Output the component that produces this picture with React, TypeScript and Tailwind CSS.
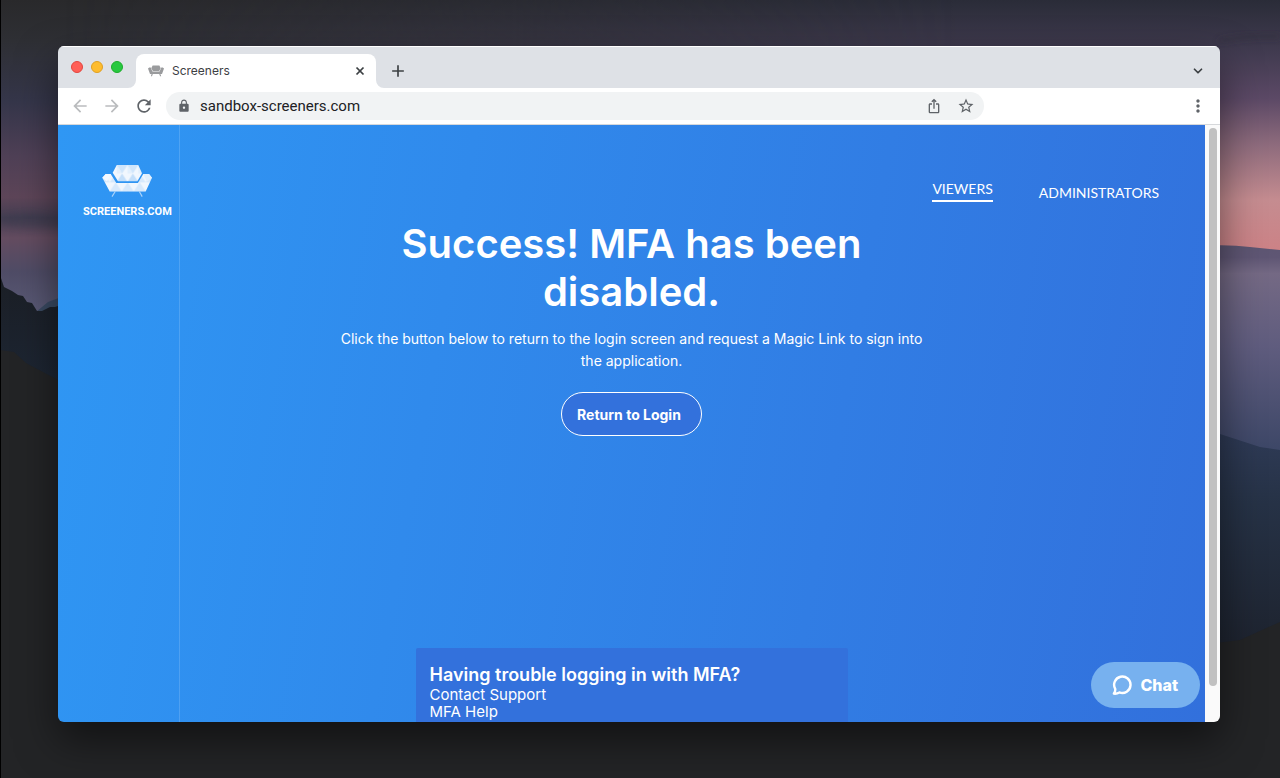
import React from "react"
import { ChevronDown, Plus, X } from "lucide-react"
import {
  MdArrowBack,
  MdArrowForward,
  MdIosShare,
  MdLock,
  MdMoreVert,
  MdRefresh,
  MdStarOutline,
} from "react-icons/md"

const BACK = "14.7,0 36.3,0 40,8.3 35.3,16.3 16,16.3 10.7,7.7"
const SEAT =
  "0.3,12.7 3.7,9 8.7,9 14.3,17.9 35.9,17.9 41.3,9 47,9 50,12.7 43.7,26.5 7.7,26.5"

function SofaLogo() {
  return (
    <svg width="50" height="32" viewBox="0 0 50 32" aria-hidden="true">
      <defs>
        <pattern id="facets" width="10.8" height="17" patternUnits="userSpaceOnUse" x="3.9">
          <rect width="10.8" height="17" fill="#f1f7fe" />
          <path d="M0 0h10.8L5.4 8.5z" fill="#cfe5fb" />
          <path d="M5.4 8.5 10.8 17H0z" fill="#c4dffa" />
          <path d="M0 0 5.4 8.5H0z" fill="#e3f0fd" />
        </pattern>
        <pattern id="seatFacets" width="12" height="9" patternUnits="userSpaceOnUse" x="7.7" y="17.4">
          <rect width="12" height="9" fill="#f1f7fe" />
          <path d="M0 9 6 0l6 9z" fill="#d7e9fc" />
        </pattern>
      </defs>
      <polygon points={BACK} fill="url(#facets)" />
      <polygon points={SEAT} fill="url(#seatFacets)" />
      <path d="M0.3 12.7 3.7 9h5L5 16.5z" fill="#f4f9ff" />
      <path d="M50 12.7 47 9h-5.7L45 16.5z" fill="#e3f0fd" />
      <path d="M13.4 26.3 10 31.6M37.2 26.3l3 5.3" stroke="#a9d2fa" strokeWidth="1.2" fill="none" />
    </svg>
  )
}

function SofaFavicon() {
  return (
    <svg width="16" height="12" viewBox="0 0 16 12" fill="#9a9b9d" aria-hidden="true">
      <path d="M4.6 0.6h6.8l1.3 2.6-1.5 2.8H4.8L3.3 3.2z" />
      <path d="M0 3.6 1.2 2.6h1.5L4.4 6.6h7.2l1.7-4h1.5L16 3.6l-2 5.4H2z" />
      <path d="M3.6 9h1.2L4 11.2H2.9zM11.2 9h1.2l.8 2.2h-1.1z" />
    </svg>
  )
}

function Wallpaper() {
  return (
    <svg
      className="absolute inset-0 h-full w-full"
      viewBox="0 0 1280 778"
      preserveAspectRatio="none"
      aria-hidden="true"
    >
      <defs>
        <linearGradient id="skyLeft" x1="0" y1="0" x2="0" y2="340" gradientUnits="userSpaceOnUse">
          <stop offset="0" stopColor="#29292b" />
          <stop offset="0.12" stopColor="#2e2f34" />
          <stop offset="0.3" stopColor="#35364a" />
          <stop offset="0.46" stopColor="#4f4056" />
          <stop offset="0.58" stopColor="#5d4558" />
          <stop offset="0.64" stopColor="#443e52" />
          <stop offset="0.7" stopColor="#644c60" />
          <stop offset="0.8" stopColor="#4f4c66" />
          <stop offset="1" stopColor="#626482" />
        </linearGradient>
        <linearGradient id="skyRight" x1="0" y1="0" x2="0" y2="260" gradientUnits="userSpaceOnUse">
          <stop offset="0" stopColor="#2a2c38" />
          <stop offset="0.2" stopColor="#413b50" />
          <stop offset="0.38" stopColor="#5c4966" />
          <stop offset="0.55" stopColor="#8c6a7c" />
          <stop offset="0.77" stopColor="#c58c90" />
          <stop offset="0.96" stopColor="#cc8286" />
        </linearGradient>
        <linearGradient id="hazeRight" x1="0" y1="245" x2="0" y2="450" gradientUnits="userSpaceOnUse">
          <stop offset="0" stopColor="#5d5672" />
          <stop offset="0.06" stopColor="#5f5674" />
          <stop offset="0.14" stopColor="#746984" />
          <stop offset="0.5" stopColor="#5f5c7e" />
          <stop offset="1" stopColor="#3d4767" />
        </linearGradient>
        <linearGradient id="hillRight" x1="0" y1="430" x2="0" y2="640" gradientUnits="userSpaceOnUse">
          <stop offset="0" stopColor="#2f3b57" />
          <stop offset="0.35" stopColor="#263246" />
          <stop offset="1" stopColor="#1e2430" />
        </linearGradient>
        <linearGradient id="hillLeft" x1="0" y1="280" x2="0" y2="390" gradientUnits="userSpaceOnUse">
          <stop offset="0" stopColor="#1b1f26" />
          <stop offset="1" stopColor="#1d2634" />
        </linearGradient>
        <linearGradient id="fade" x1="0" y1="0" x2="1280" y2="0" gradientUnits="userSpaceOnUse">
          <stop offset="0.05" stopColor="#fff" stopOpacity="0" />
          <stop offset="0.75" stopColor="#fff" />
        </linearGradient>
        <mask id="fadeMask">
          <rect width="1280" height="778" fill="url(#fade)" />
        </mask>
        <filter id="soft" x="-20%" y="-50%" width="140%" height="200%">
          <feGaussianBlur stdDeviation="3" />
        </filter>
      </defs>
      <rect width="1280" height="778" fill="url(#skyLeft)" />
      <rect width="1280" height="778" fill="url(#skyRight)" mask="url(#fadeMask)" />
      <path d="M0 217 30 213l40 8v6l-45 1-25-4z" fill="#35384a" filter="url(#soft)" opacity="0.3" />
      <path d="M1218 40q25-6 62-5v3q-40-1-60 5z" fill="#2d2c38" filter="url(#soft)" opacity="0.6" />
      {/* right ridges */}
      <path d="M1150 252q60-10 100-5l30 3v210h-130z" fill="url(#hazeRight)" />
      <path d="M1150 416 1220 434l40 13 20 3v328h-130z" fill="url(#hillRight)" />
      {/* left ridges */}
      <path d="M36 312 48 302l32-12v50H36z" fill="#3a4a62" />
      <path
        d="M0 275 4 287l8 4 6 4 5 1 4 6 5 1 5 8 5 0 8-4 5 0 6-2v200H0z"
        fill="url(#hillLeft)"
      />
      <path d="M0 350 14 352 26 363 58 380 200 470 700 700 1200 645 1240 640 1280 622V778H0z" fill="#232426" />
      <rect width="1" height="778" fill="#000" />
    </svg>
  )
}

function TabStrip() {
  return (
    <div className="flex h-[42px] items-end border-t border-white bg-[#dee1e6] pr-[15px] text-[#3c4043]">
      <div className="flex gap-2 self-center px-[13px] pb-0.5">
        <span className="h-3 w-3 rounded-full border border-[#e2463f] bg-[#ff5f57]" />
        <span className="h-3 w-3 rounded-full border border-[#dfa023] bg-[#febc2e]" />
        <span className="h-3 w-3 rounded-full border border-[#1dad2b] bg-[#28c840]" />
      </div>
      {/* active tab, flared into the toolbar at both feet */}
      <svg width="8" height="8" viewBox="0 0 8 8" className="-ml-2" aria-hidden="true">
        <path d="M8 0v8H0a8 8 0 0 0 8-8z" fill="#fff" />
      </svg>
      <div className="flex h-[34px] w-60 items-center rounded-t-lg bg-white pl-3 pr-2">
        <SofaFavicon />
        <span className="ml-2 flex-1 text-[12px]">Screeners</span>
        <button aria-label="Close tab" className="flex h-4 w-4 items-center justify-center">
          <X className="h-3.5 w-3.5" strokeWidth={3} strokeLinecap="butt" />
        </button>
      </div>
      <svg width="8" height="8" viewBox="0 0 8 8" aria-hidden="true">
        <path d="M0 0v8h8a8 8 0 0 1-8-8z" fill="#fff" />
      </svg>
      <button aria-label="New tab" className="ml-1 flex h-[34px] w-5 items-center justify-center">
        <Plus className="h-5 w-5 shrink-0" strokeLinecap="butt" />
      </button>
      <button aria-label="Search tabs" className="ml-auto flex h-[34px] items-center">
        <ChevronDown className="h-3.5 w-3.5" strokeWidth={3} />
      </button>
    </div>
  )
}

function Toolbar() {
  return (
    <div className="flex h-[37px] items-center border-b border-[#d6d8db] bg-white pl-1.5 pr-3 text-[#5f6368]">
      <button aria-label="Back" className="flex w-8 justify-center text-[#babcbe]">
        <MdArrowBack className="h-5 w-5" />
      </button>
      <button aria-label="Forward" className="flex w-8 justify-center text-[#babcbe]">
        <MdArrowForward className="h-5 w-5" />
      </button>
      <button aria-label="Reload" className="flex w-8 justify-center">
        <MdRefresh className="h-5 w-5" />
      </button>
      <div className="ml-1.5 mr-[204px] flex h-7 flex-1 items-center rounded-full bg-[#f1f3f4] pl-[11px] pr-[9px]">
        <MdLock className="h-3.5 w-3.5" />
        <input
          aria-label="Address"
          defaultValue="sandbox-screeners.com"
          className="ml-[9px] min-w-0 flex-1 bg-transparent font-['Roboto',sans-serif] text-[15px] text-[#202124] outline-none"
        />
        <button aria-label="Share">
          <MdIosShare className="h-4 w-4" />
        </button>
        <button aria-label="Bookmark" className="ml-[15px]">
          <MdStarOutline className="h-[18px] w-[18px]" />
        </button>
      </div>
      <button aria-label="Menu">
        <MdMoreVert className="h-5 w-5" />
      </button>
    </div>
  )
}

function ChatButton() {
  return (
    <button className="absolute bottom-3.5 right-[5px] flex h-[46px] items-center gap-2 rounded-full bg-[#77b1ef] pl-[21px] pr-[22px] text-[16px] font-extrabold text-white">
      <svg width="20" height="20" viewBox="0 0 20 20" fill="none" aria-hidden="true">
        <path
          d="M3.2 13.8A8.2 8.2 0 1 1 7.4 17.4Q4.8 19 1.9 18.6 3.6 16.4 3.2 13.8z"
          stroke="#fff"
          strokeWidth="2.4"
          strokeLinejoin="round"
        />
      </svg>
      Chat
    </button>
  )
}

export default function App() {
  return (
    <div className="relative flex min-h-screen flex-col bg-[#232426] font-['Inter',sans-serif]">
      <Wallpaper />
      <div className="relative mb-14 ml-[58px] mr-[60px] mt-[46px] flex flex-1 flex-col overflow-hidden rounded-md shadow-[0_18px_40px_rgba(0,0,0,0.5)]">
        <TabStrip />
        <Toolbar />
        <div className="flex flex-1">
          <div className="relative grid flex-1 grid-cols-[122px_1fr_122px] grid-rows-[auto_1fr] bg-[linear-gradient(100deg,#2f97f4,#3270dc)] text-white">
            <aside className="row-span-2 border-r border-white/15 pl-[25px] pt-10">
              <a
                href="#"
                className="inline-flex flex-col items-center gap-[9px] font-['Roboto',sans-serif] text-[11px] font-bold leading-[12px]"
              >
                <SofaLogo />
                SCREENERS.COM
              </a>
            </aside>
            <nav className="col-span-2 flex h-[95px] items-end justify-end gap-[46px] pb-[18px] pr-[46px] font-['Lato',sans-serif] text-[14px] leading-[18px]">
              <a href="#" className="border-b-2 border-white pb-0.5">
                VIEWERS
              </a>
              <a href="#">ADMINISTRATORS</a>
            </nav>
            <main className="flex flex-col items-center text-center">
              <h1 className="max-w-[600px] text-[40px] font-semibold leading-[48px]">
                Success! MFA has been
                <br />
                disabled.
              </h1>
              <p className="mt-3 max-w-[620px] text-[14px] leading-[22px]">
                Click the button below to return to the login screen and request a Magic Link to sign into
                <br />
                the application.
              </p>
              <button className="mt-5 h-11 rounded-full border border-white bg-[#3371dc] pl-[15px] pr-5 text-[14px] font-bold">
                Return to Login
              </button>
              <section className="mt-auto w-[432px] rounded-t-xs bg-[#3371dc] px-3.5 pb-0.5 pt-4 text-left">
                <h2 className="text-[18px] font-semibold leading-[22px]">Having trouble logging in with MFA?</h2>
                <ul className="text-[15px] leading-[17px]">
                  <li>
                    <a href="#">Contact Support</a>
                  </li>
                  <li>
                    <a href="#">MFA Help</a>
                  </li>
                </ul>
              </section>
            </main>
            <ChatButton />
          </div>
          {/* scrollbar */}
          <div className="flex w-[15px] flex-col items-center bg-[#fafafa] pt-[3px]">
            <div className="w-2 grow-[94] rounded-full bg-[#c1c1c1]" />
            <div className="grow-[6]" />
          </div>
        </div>
      </div>
    </div>
  )
}
